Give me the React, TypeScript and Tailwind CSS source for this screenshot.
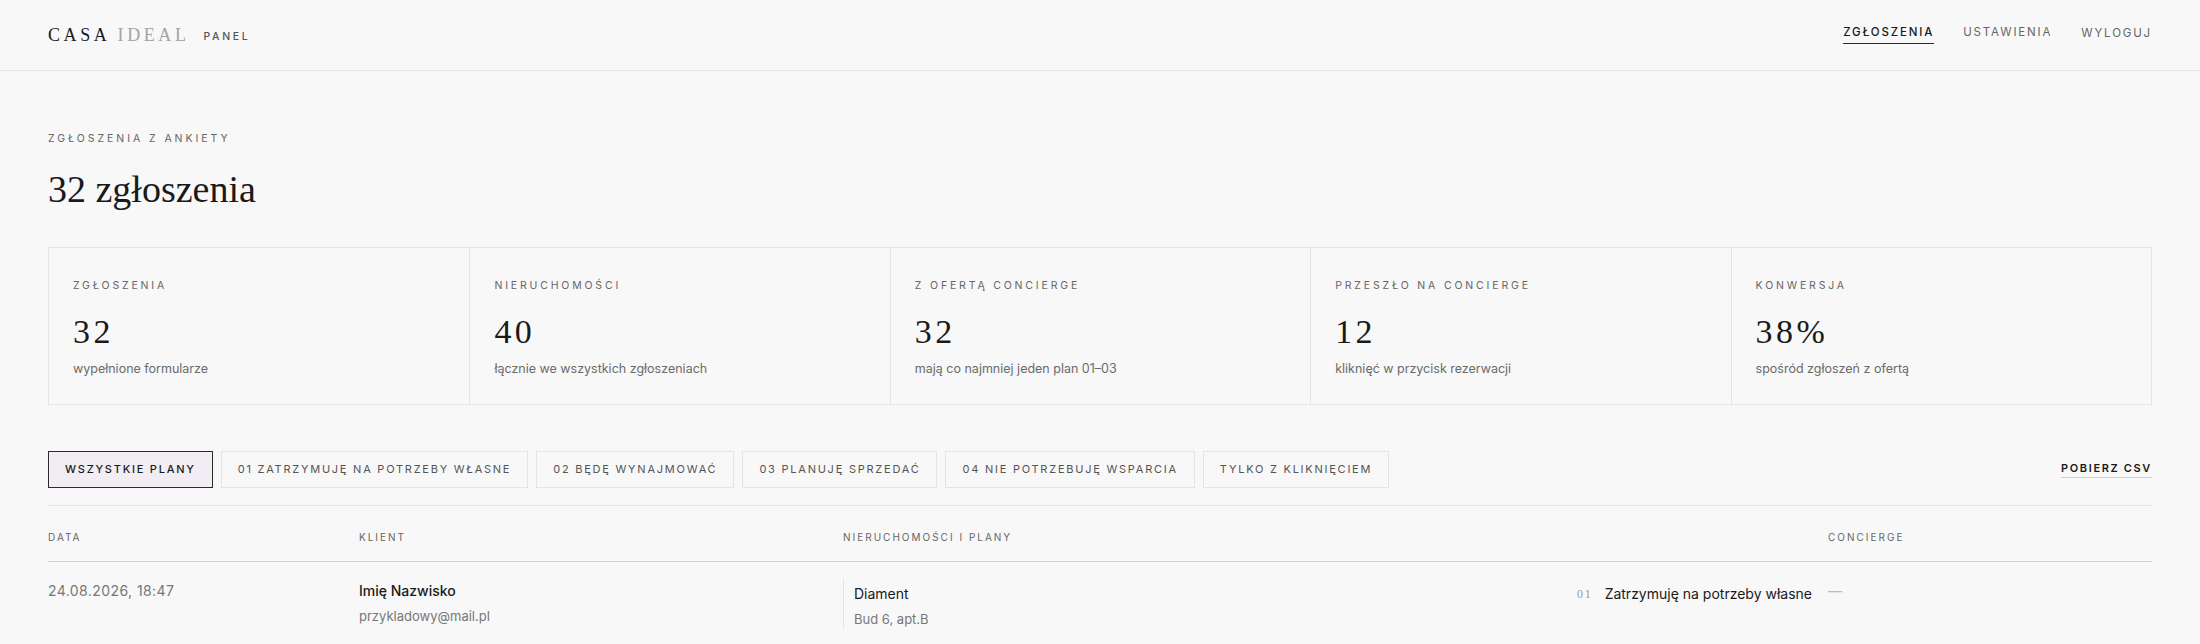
const serif = "font-['Liberation_Serif','Times_New_Roman',serif]";

const stats = [
  { label: "Zgłoszenia", value: "32", note: "wypełnione formularze" },
  { label: "Nieruchomości", value: "40", note: "łącznie we wszystkich zgłoszeniach" },
  { label: "Z ofertą concierge", value: "32", note: "mają co najmniej jeden plan 01–03" },
  { label: "Przeszło na concierge", value: "12", note: "kliknięć w przycisk rezerwacji" },
  { label: "Konwersja", value: "38%", note: "spośród zgłoszeń z ofertą" },
];

const filters = [
  "Wszystkie plany",
  "01 Zatrzymuję na potrzeby własne",
  "02 Będę wynajmować",
  "03 Planuję sprzedać",
  "04 Nie potrzebuję wsparcia",
  "Tylko z kliknięciem",
];

function Header() {
  return (
    <header className="h-[71px] border-b border-[#e6e6e6] px-12 flex items-center justify-between">
      <div className="flex items-center gap-[14px]">
        <span className={`${serif} text-[18px] tracking-[0.2em] leading-none`}>
          <span className="text-[#1a1a1a]">CASA</span>{" "}
          <span className="text-[#a3a3a3]">IDEAL</span>
        </span>
        <span className="text-[10.5px] tracking-[0.25em] font-medium text-[#555] mt-[3px]">PANEL</span>
      </div>
      <nav className="self-start pt-[25px] flex items-start gap-[29px] text-[11.5px] leading-[14px] tracking-[0.16em] uppercase">
        <a className="text-[#1a1a1a] font-medium border-b-[1.5px] border-[#2a2a2a] pb-[4px]">Zgłoszenia</a>
        <a className="text-[#666]">Ustawienia</a>
        <a className="text-[#666] mt-[1px]">Wyloguj</a>
      </nav>
    </header>
  );
}

function StatCards() {
  return (
    <div className="mt-[39px] grid grid-cols-5 border border-[#e4e4e4]">
      {stats.map((s, i) => (
        <div
          key={s.label}
          className={`h-[156px] px-6 pt-[32px] ${i > 0 ? "border-l border-[#e4e4e4]" : ""}`}
        >
          <div className="text-[10.5px] leading-[12px] tracking-[0.27em] uppercase text-[#666]">{s.label}</div>
          <div className={`${serif} mt-[23px] text-[34px] leading-none tracking-[0.1em] text-[#1a1a1a]`}>{s.value}</div>
          <div className="mt-[10px] text-[12.5px] leading-5 text-[#6b6b6b]">{s.note}</div>
        </div>
      ))}
    </div>
  );
}

function Filters() {
  return (
    <div className="mt-[46px] pb-[17px] border-b border-[#e6e6e6] flex items-center justify-between">
      <div className="flex gap-2">
        {filters.map((f, i) => (
          <button
            key={f}
            className={`h-[37px] px-4 text-[11px] tracking-[0.16em] uppercase border ${
              i === 0
                ? "border-[#2a2a2a] bg-[#f1edf2] text-[#1a1a1a] font-medium"
                : "border-[#e4e4e4] bg-[#f8f8f8] text-[#555]"
            }`}
          >
            {f}
          </button>
        ))}
      </div>
      <a className="text-[11px] leading-[13px] tracking-[0.15em] font-semibold text-[#1a1a1a] pb-[2px] border-b border-[#cfcfcf]">
        POBIERZ CSV
      </a>
    </div>
  );
}

function Table() {
  const cols = "grid grid-cols-[311px_484px_985px_1fr]";
  return (
    <div>
      <div className={`${cols} pt-[25px] pb-[18px] border-b border-[#d2d2d2] text-[10px] leading-[12px] tracking-[0.2em] uppercase text-[#666]`}>
        <div>Data</div>
        <div>Klient</div>
        <div>Nieruchomości i plany</div>
        <div>Concierge</div>
      </div>
      <div className={`${cols} pt-4 pb-6 items-start`}>
        <div className="pt-[3px] text-[14px] leading-5 tracking-[0.03em] text-[#777]">24.08.2026, 18:47</div>
        <div className="pt-[3px]">
          <div className="text-[14px] leading-5 font-medium text-[#1a1a1a]">Imię Nazwisko</div>
          <div className="mt-[5px] text-[13px] leading-5 text-[#777]">przykladowy@mail.pl</div>
        </div>
        <div className="flex justify-between items-start pr-4">
          <div className="border-l border-[#e4e4e4] pl-[10px] pt-[6px]">
            <div className="text-[14px] leading-5 text-[#1a1a1a]">Diament</div>
            <div className="mt-[5px] text-[13px] leading-5 text-[#777]">Bud 6, apt.B</div>
          </div>
          <div className="pt-[6px] flex items-center gap-3">
            <span className={`${serif} text-[12px] tracking-[0.15em] text-[#999]`}>01</span>
            <span className="text-[14px] leading-5 text-[#1a1a1a]">Zatrzymuję na potrzeby własne</span>
          </div>
        </div>
        <div className="pt-[3px] text-[14px] leading-5 text-[#bbb]">—</div>
      </div>
    </div>
  );
}

export default function App() {
  return (
    <div className="min-h-screen bg-[#f8f8f8] font-['Inter',sans-serif] text-[#1a1a1a]">
      <Header />
      <main className="px-12 pt-[62px]">
        <div className="text-[10.5px] leading-[12px] tracking-[0.28em] uppercase text-[#666]">Zgłoszenia z ankiety</div>
        <h1 className={`${serif} mt-[25px] text-[38px] leading-none text-[#1a1a1a]`}>32 zgłoszenia</h1>
        <StatCards />
        <Filters />
        <Table />
      </main>
    </div>
  );
}
